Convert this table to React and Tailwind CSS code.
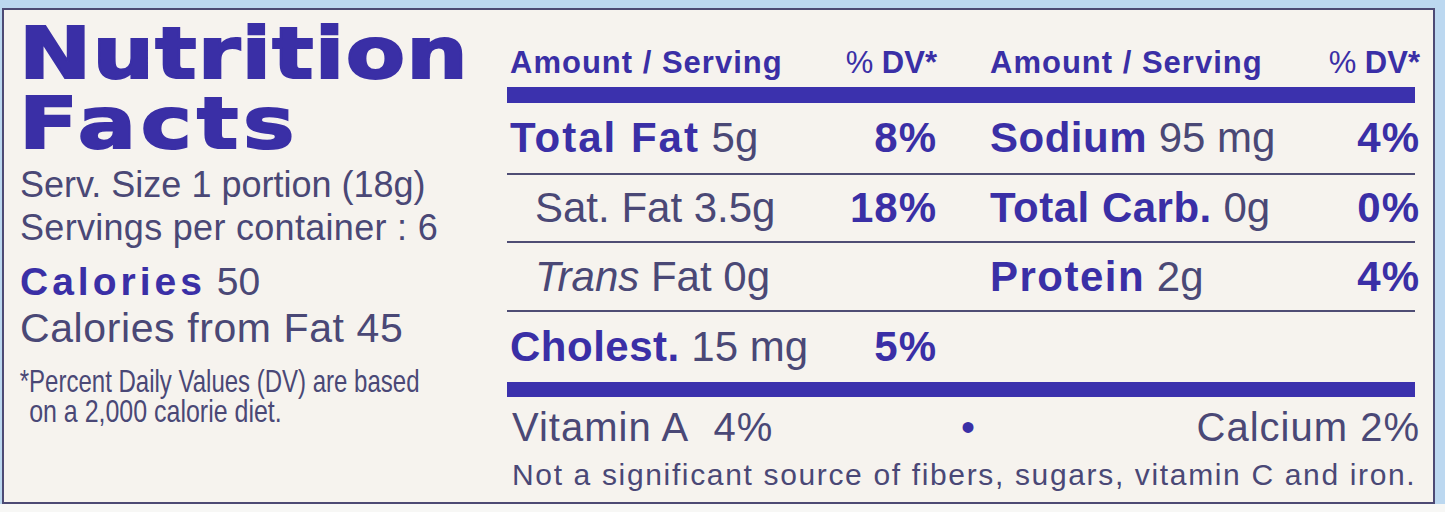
const BLUE = 'text-[#3a2fa6]';
const INK = 'text-[#4a4876]';

function Row({ h, left, right, border = true }) {
  return (
    <div className={`${h} grid grid-cols-[453px_455px] ${border ? 'border-b-2 border-[#4f4d74]' : ''}`}>
      <div className="flex items-center justify-between pl-[3px] pr-[23px]">{left}</div>
      <div className="flex items-center justify-between pl-[30px] -mr-[5px]">{right}</div>
    </div>
  );
}

// name: bold blue label, plain: regular text before amount (indented rows)
function Nutrient({ name, plain, italic, amount, pct, indent, track = 'tracking-[1.5px]' }) {
  return (
    <>
      <span className={`text-[42px] leading-none whitespace-nowrap ${indent ? 'pl-[25px]' : ''}`}>
        {name && <span className={`font-bold ${BLUE} ${track}`}>{name}</span>}
        {italic && <span className={`italic ${INK}`}>{italic}</span>}
        {plain && <span className={INK}>{plain}</span>}
        {' '}
        <span className={INK}>{amount}</span>
      </span>
      {pct && <span className={`text-[42px] leading-none font-bold ${BLUE} tracking-[1px]`}>{pct}</span>}
    </>
  );
}

function Header() {
  return (
    <>
      <span className={`text-[31px] leading-none font-bold ${BLUE} tracking-[1px]`}>Amount / Serving</span>
      <span className={`text-[31px] leading-none ${BLUE}`}>
        <span className="font-normal">%</span> <span className="font-bold">DV*</span>
      </span>
    </>
  );
}

export default function App() {
  return (
    <div className="w-[1445px] h-[512px] bg-[#bcd8f0] overflow-hidden" style={{ fontFamily: '"Liberation Sans", Arial, sans-serif' }}>
      <div className="mt-[8px] ml-[2px] w-[1433px] h-[496px] border-2 border-[#4d4a74] bg-[#f6f3ee] flex">
        {/* left column */}
        <div className="w-[503px] pl-[15px] pt-[8px] flex flex-col">
          <div
            className={`text-[72px] leading-[70px] font-bold ${BLUE} origin-left scale-x-[1.2] tracking-[1px] [-webkit-text-stroke:2px_#3a2fa6]`}
            style={{ fontFamily: '"DejaVu Sans", sans-serif' }}
          >
            Nutrition
          </div>
          <div
            className={`text-[72px] leading-[70px] font-bold ${BLUE} origin-left scale-x-[1.2] tracking-[4px] [-webkit-text-stroke:2px_#3a2fa6]`}
            style={{ fontFamily: '"DejaVu Sans", sans-serif' }}
          >
            Facts
          </div>
          <div className={`mt-[5px] pl-[1px] text-[36px] leading-[43px] ${INK} whitespace-nowrap`}>Serv. Size 1 portion (18g)</div>
          <div className={`pl-[1px] text-[36px] leading-[43px] ${INK} whitespace-nowrap tracking-[0.3px]`}>Servings per container : 6</div>
          <div className="mt-[9px] pl-[1px] text-[39px] leading-[47px] whitespace-nowrap">
            <span className={`font-bold ${BLUE} tracking-[4px]`}>Calories</span> <span className={INK}>50</span>
          </div>
          <div className={`pl-[1px] text-[41px] leading-[47px] ${INK} whitespace-nowrap tracking-[0.6px]`}>Calories from Fat 45</div>
          <div className={`mt-[14px] pl-[1px] text-[32px] leading-[30px] ${INK} whitespace-nowrap origin-left scale-x-[0.75]`}>
            *Percent Daily Values (DV) are based
          </div>
          <div className={`text-[32px] leading-[30px] ${INK} whitespace-nowrap origin-left scale-x-[0.78] pl-[13px]`}>
            on a 2,000 calorie diet.
          </div>
        </div>

        {/* right tables */}
        <div className="w-[908px] flex flex-col">
          <div className="h-[77px] grid grid-cols-[453px_455px] items-end pb-[9px]">
            <div className="flex items-center justify-between pl-[3px] pr-[23px]"><Header /></div>
            <div className="flex items-center justify-between pl-[30px] -mr-[5px]"><Header /></div>
          </div>
          <div className="h-[16px] bg-[#3b31ad]" />
          <Row
            h="h-[72px]"
            left={<Nutrient name="Total Fat" amount="5g" pct="8%" track="tracking-[2px]" />}
            right={<Nutrient name="Sodium" amount="95 mg" pct="4%" track="tracking-[0.5px]" />}
          />
          <Row
            h="h-[68px]"
            left={<Nutrient plain="Sat. Fat" amount="3.5g" pct="18%" indent />}
            right={<Nutrient name="Total Carb." amount="0g" pct="0%" track="tracking-[0.5px]" />}
          />
          <Row
            h="h-[69px]"
            left={<Nutrient italic="Trans" amount="Fat 0g" indent />}
            right={<Nutrient name="Protein" amount="2g" pct="4%" />}
          />
          <Row
            h="h-[70px]"
            border={false}
            left={<Nutrient name="Cholest." amount="15 mg" pct="5%" track="tracking-[0.5px]" />}
            right={null}
          />
          <div className="h-[15px] bg-[#3b31ad]" />
          <div className={`pt-[10px] grid grid-cols-[453px_455px] text-[40px] leading-[40px] ${INK} tracking-[1px]`}>
            <div className="pl-[5px] whitespace-nowrap">Vitamin A&nbsp;&nbsp;4%</div>
            <div className="flex justify-between -mr-[5px]">
              <span className={`${BLUE} pl-[1px]`}>•</span>
              <span>Calcium 2%</span>
            </div>
          </div>
          <div className={`mt-[13px] pl-[5px] text-[30px] leading-[30px] ${INK} whitespace-nowrap tracking-[1.65px]`}>
            Not a significant source of fibers, sugars, vitamin C and iron.
          </div>
        </div>
      </div>
      <div className="h-[8px] bg-[#f7f7f5]" />
    </div>
  );
}
